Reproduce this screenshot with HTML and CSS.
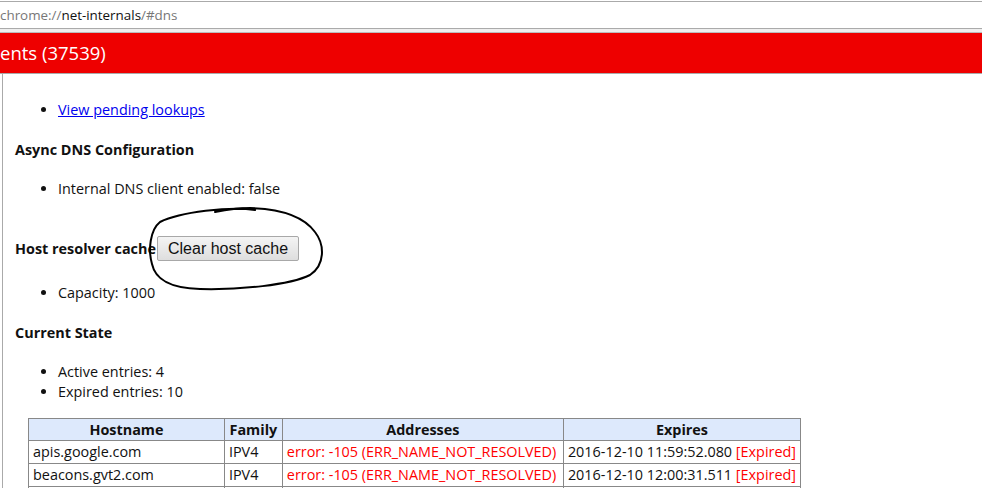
FILE: index.html
```html
<!DOCTYPE html>
<html>
<head>
<meta charset="utf-8">
<link rel="stylesheet" href="styles.css">
</head>
<body>
<div class="urlbar"><span class="dim">chrome://</span><span class="host">net-internals</span><span class="dim">/#dns</span></div>
<div class="strip"></div>
<div class="redbar">ents (37539)</div>
<div class="content">
  <ul class="list first">
    <li><a href="#">View pending lookups</a></li>
  </ul>
  <h4 class="heading">Async DNS Configuration</h4>
  <ul class="list">
    <li>Internal DNS client enabled: false</li>
  </ul>
  <div class="host-row">
    <h4 class="heading inline">Host resolver cache</h4>
    <button class="btn">Clear host cache</button>
  </div>
  <ul class="list after-row">
    <li>Capacity: 1000</li>
  </ul>
  <h4 class="heading">Current State</h4>
  <ul class="list">
    <li>Active entries: 4</li>
    <li>Expired entries: 10</li>
  </ul>
  <table class="dns-table">
    <thead>
      <tr><th class="c1">Hostname</th><th class="c2">Family</th><th class="c3">Addresses</th><th class="c4">Expires</th></tr>
    </thead>
    <tbody>
      <tr><td>apis.google.com</td><td>IPV4</td><td class="err">error: -105 (ERR_NAME_NOT_RESOLVED)</td><td>2016-12-10 11:59:52.080 <span class="err">[Expired]</span></td></tr>
      <tr><td>beacons.gvt2.com</td><td>IPV4</td><td class="err">error: -105 (ERR_NAME_NOT_RESOLVED)</td><td>2016-12-10 12:00:31.511 <span class="err">[Expired]</span></td></tr>
      <tr><td>&nbsp;</td><td>&nbsp;</td><td>&nbsp;</td><td>&nbsp;</td></tr>
    </tbody>
  </table>
  <svg class="scribble" width="185" height="92" viewBox="0 0 185 92">
    <path d="M 110 6 C 85 2, 35 8, 15 18 C 5 26, 3 46, 7 60 C 10 74, 22 84, 55 85 C 95 86, 145 81, 165 71 C 180 61, 180 41, 170 28 C 160 14, 140 5, 105 4 C 90 4, 80 6, 70 8" fill="none" stroke="#000" stroke-width="2" stroke-linecap="round"/>
  </svg>
</div>
</body>
</html>
```
FILE: styles.css
```css
html, body {
  margin: 0;
  padding: 0;
  background: #fff;
  overflow: hidden;
  height: 488px;
}
body {
  font-family: "Open Sans", "Noto Sans", sans-serif;
  font-size: 14.4px;
  color: #111;
}
.urlbar {
  margin-top: 1px;
  height: 26px;
  line-height: 26px;
  border-top: 1px solid #aaa;
  border-bottom: 1px solid #aaa;
  font-size: 13.4px;
  white-space: nowrap;
}
.urlbar .dim { color: #777; }
.urlbar .host { color: #111; }
.strip {
  height: 3px;
  background: #eee;
  border-bottom: 1px solid #bbb;
}
.redbar {
  height: 40px;
  line-height: 40px;
  background: #ee0000;
  color: #fff;
  font-size: 18.5px;
  border-bottom: 1px solid #aaa;
  white-space: nowrap;
}
.content {
  position: relative;
  margin-left: 2px;
  border-left: 1px solid #aaa;
  padding-left: 12px;
  padding-top: 26px;
  height: 388px;
  overflow: hidden;
}
.list {
  margin: 19px 0 0 0;
  padding-left: 43px;
  line-height: 20px;
}
.list.first { margin-top: 0; }
.list a { color: #0000ee; }
.heading {
  margin: 20px 0 0 0;
  font-size: 14.4px;
  font-weight: bold;
  line-height: 20px;
}
.host-row {
  display: flex;
  align-items: center;
  gap: 1px;
  margin-top: 37px;
  height: 25px;
}
.heading.inline { margin: 0; }
.btn {
  font-family: "Liberation Sans", Arial, sans-serif;
  font-size: 16px;
  height: 25px;
  padding: 0 10px;
  color: #111;
  background: linear-gradient(#f4f4f4, #dedede);
  border: 1px solid #a8a8a8;
  border-radius: 2px;
}
.list.after-row { margin-top: 22px; }
.dns-table {
  margin: 16px 0 0 13px;
  border-collapse: collapse;
  font-size: 14.4px;
  width: 773px;
}
.dns-table th, .dns-table td {
  border: 1px solid #888;
  padding: 0 4px;
  height: 22px;
  line-height: 22px;
  text-align: left;
  white-space: nowrap;
}
.dns-table th {
  background: #dde9fc;
  text-align: center;
  height: 21px;
  line-height: 21px;
}
.c1 { width: 187px; }
.c2 { width: 49px; }
.c3 { width: 272px; }
.err { color: #f00; }
.scribble {
  position: absolute;
  left: 142px;
  top: 130px;
}
```
